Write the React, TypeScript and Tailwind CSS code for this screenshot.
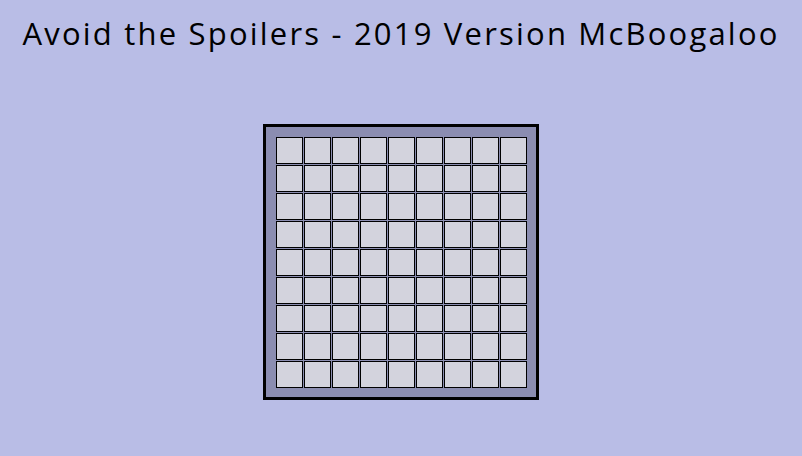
const SIZE = 9

function Cell() {
  return <div className="h-[27px] w-[27px] border border-black bg-[#d3d3dd]" />
}

export default function App() {
  const cells = Array.from({ length: SIZE * SIZE })

  return (
    <div className="flex min-h-[456px] w-full flex-col items-center bg-[#b9bde6] font-['Open_Sans',sans-serif] text-black">
      <h1 className="mt-[13px] text-[31px] leading-[41px] tracking-[2.2px]">
        Avoid the Spoilers - 2019 Version McBoogaloo
      </h1>
      <div className="mt-[70px] h-[276px] w-[276px] border-[3px] border-black bg-[#8b8db1] pl-[10px] pt-[10px]">
        <div className="grid grid-cols-[repeat(9,27px)] gap-[1px]">
          {cells.map((_, i) => (
            <Cell key={i} />
          ))}
        </div>
      </div>
    </div>
  )
}
